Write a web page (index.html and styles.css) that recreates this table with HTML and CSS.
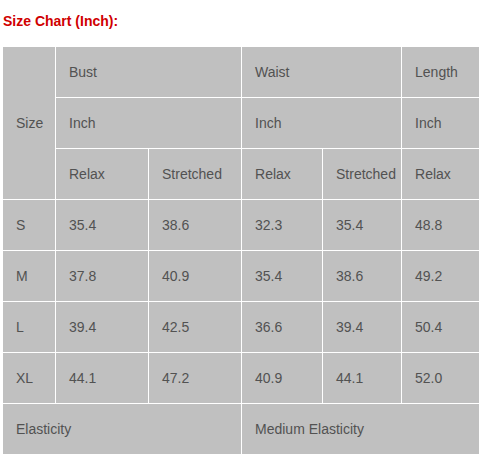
FILE: index.html
```html
<!DOCTYPE html>
<html>
<head>
<meta charset="utf-8">
<link rel="stylesheet" href="styles.css">
</head>
<body>
<h2 class="title">Size Chart (Inch):</h2>
<table class="chart">
  <colgroup>
    <col class="c1"><col class="c2"><col class="c3"><col class="c4"><col class="c5"><col class="c6">
  </colgroup>
  <tr><td rowspan="3">Size</td><td colspan="2">Bust</td><td colspan="2">Waist</td><td>Length</td></tr>
  <tr><td colspan="2">Inch</td><td colspan="2">Inch</td><td>Inch</td></tr>
  <tr><td>Relax</td><td>Stretched</td><td>Relax</td><td>Stretched</td><td>Relax</td></tr>
  <tr><td>S</td><td>35.4</td><td>38.6</td><td>32.3</td><td>35.4</td><td>48.8</td></tr>
  <tr><td>M</td><td>37.8</td><td>40.9</td><td>35.4</td><td>38.6</td><td>49.2</td></tr>
  <tr><td>L</td><td>39.4</td><td>42.5</td><td>36.6</td><td>39.4</td><td>50.4</td></tr>
  <tr><td>XL</td><td>44.1</td><td>47.2</td><td>40.9</td><td>44.1</td><td>52.0</td></tr>
  <tr><td colspan="3">Elasticity</td><td colspan="3">Medium Elasticity</td></tr>
</table>
</body>
</html>
```
FILE: styles.css
```css
html, body {
  margin: 0;
  padding: 0;
  background: #ffffff;
}
body {
  font-family: "Liberation Sans", Arial, sans-serif;
}
.title {
  margin: 13px 0 0 3px;
  font-size: 14px;
  line-height: 16px;
  font-weight: bold;
  color: #d00000;
}
.chart {
  margin: 17px 0 0 2px;
  border-collapse: collapse;
  table-layout: fixed;
  width: 477px;
  background: #c0c0c0;
}
.c1 { width: 53px; }
.c2 { width: 93px; }
.c3 { width: 93px; }
.c4 { width: 81px; }
.c5 { width: 79px; }
.c6 { width: 78px; }
.chart td {
  border: 1px solid #ffffff;
  height: 50px;
  padding: 0 0 0 13px;
  font-size: 14px;
  color: #525252;
  vertical-align: middle;
  white-space: nowrap;
}
```
